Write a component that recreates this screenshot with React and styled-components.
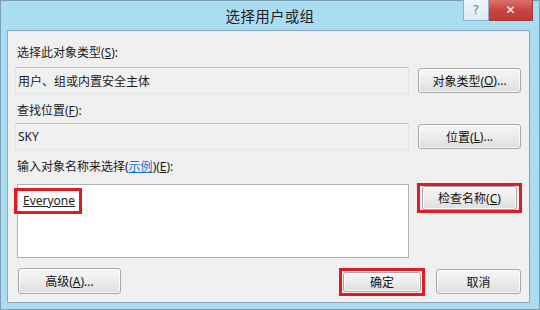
import React from "react";
import styled, { createGlobalStyle } from "styled-components";

const Global = createGlobalStyle`
  html, body { margin: 0; padding: 0; background: #ffffff; }
  body { font-family: "Noto Sans", "Noto Sans CJK SC", sans-serif; }
`;

const Window = styled.div`
  width: 540px;
  height: 310px;
  box-sizing: border-box;
  border: 1px solid #7f9db0;
  background: linear-gradient(180deg, #a9ddf3 0%, #abdcf1 100%);
  display: flex;
  flex-direction: column;
`;

const TitleBar = styled.div`
  height: 29px;
  flex: none;
  display: grid;
  grid-template-columns: 1fr auto 1fr;
  align-items: start;
`;

const Title = styled.div`
  grid-column: 2;
  margin-top: 5px;
  font-family: "Noto Sans CJK SC", sans-serif;
  font-size: 14.5px;
  line-height: 20px;
  color: #1e1e1e;
  letter-spacing: 0.3px;
`;

const Caption = styled.div`
  grid-column: 3;
  justify-self: end;
  display: flex;
  margin-right: 6px;
  margin-top: -1px;
`;

const CapButton = styled.div`
  height: 21px;
  width: ${(p) => p.$w}px;
  box-sizing: border-box;
  display: flex;
  align-items: center;
  justify-content: center;
  font-family: "DejaVu Sans", sans-serif;
  font-size: 12px;
  font-weight: ${(p) => (p.$close ? 700 : 400)};
  color: ${(p) => (p.$close ? "#ffffff" : "#6a7a86")};
  border: 1px solid ${(p) => (p.$close ? "#a33a3a" : "#8fb0c2")};
  border-top: none;
  background: ${(p) =>
    p.$close
      ? "linear-gradient(180deg, #d9706c 0%, #c7433f 55%, #c0393a 100%)"
      : "linear-gradient(180deg, #eef6fa 0%, #dcebf3 100%)"};
  & + & { border-left: none; }
`;

const Panel = styled.div`
  flex: 1;
  margin: 0 9px 6px 6px;
  border: 1px solid #8ea9b8;
  background: #f0f0f0;
  padding: 14px 8px 0 7px;
  display: flex;
  flex-direction: column;
`;

const Label = styled.div`
  font-size: 12px;
  line-height: 16px;
  color: #1a1a1a;
  padding-left: 2px;
  margin-top: ${(p) => p.$mt || 0}px;
`;

const Key = styled.span`
  text-decoration: underline;
`;

const Link = styled.span`
  color: #1a6fc9;
  text-decoration: underline;
`;

const FieldRow = styled.div`
  display: grid;
  grid-template-columns: 1fr 103px;
  column-gap: 9px;
  align-items: ${(p) => p.$align || "center"};
  margin-top: ${(p) => p.$mt || 0}px;
`;

const ReadBox = styled.div`
  height: ${(p) => p.$h}px;
  box-sizing: border-box;
  border-top: 1px solid #c4c4c4;
  border-left: 1px solid #e2e2e2;
  border-right: 1px solid #e2e2e2;
  border-bottom: 1px solid #e6e6e6;
  background: #f0f0f0;
  padding-left: 2px;
  font-size: 12px;
  display: flex;
  align-items: center;
  color: #1a1a1a;
`;

const Button = styled.div`
  height: ${(p) => p.$h || 25}px;
  width: ${(p) => (p.$w ? `${p.$w}px` : "auto")};
  flex: ${(p) => (p.$grow ? 1 : "none")};
  margin-left: ${(p) => p.$ml || 0}px;
  margin-top: ${(p) => p.$mt || 0}px;
  box-sizing: border-box;
  border: 1px solid #a8a8a8;
  border-radius: 3px;
  background: linear-gradient(180deg, #f7f7f7 0%, #ececec 50%, #dedede 100%);
  box-shadow: inset 0 0 0 1px rgba(255, 255, 255, 0.7);
  font-size: 12px;
  color: #111;
  display: flex;
  align-items: center;
  justify-content: center;
`;

const TextArea = styled.div`
  height: 74px;
  margin-left: 2px;
  box-sizing: border-box;
  border: 1px solid #aeb0b5;
  background: #ffffff;
  padding: 2px 0 0 0;
  display: flex;
  align-items: flex-start;
`;

const Mark = styled.div`
  border: 3px solid #e11b24;
  box-sizing: border-box;
  padding: ${(p) => p.$pad};
  margin: ${(p) => p.$m || 0};
  display: ${(p) => (p.$inline ? "inline-flex" : "flex")};
`;

const Entry = styled.span`
  font-size: 12px;
  line-height: 16px;
  color: #222;
  text-decoration: underline;
`;

const BottomRow = styled.div`
  display: flex;
  align-items: flex-start;
  margin-top: 10px;
  padding-left: 3px;
`;

const Spacer = styled.div`
  flex: 1;
`;

export default function App() {
  return (
    <>
      <Global />
      <Window>
        <TitleBar>
          <Title>选择用户或组</Title>
          <Caption>
            <CapButton $w={26}>?</CapButton>
            <CapButton $w={44} $close>
              ✕
            </CapButton>
          </Caption>
        </TitleBar>
        <Panel>
          <Label>
            选择此对象类型(<Key>S</Key>):
          </Label>
          <FieldRow $mt={6}>
            <ReadBox $h={27}>用户、组或内置安全主体</ReadBox>
            <Button>
              对象类型(<Key>O</Key>)...
            </Button>
          </FieldRow>
          <Label $mt={9}>
            查找位置(<Key>F</Key>):
          </Label>
          <FieldRow $mt={4}>
            <ReadBox $h={27}>SKY</ReadBox>
            <Button>
              位置(<Key>L</Key>)...
            </Button>
          </FieldRow>
          <Label $mt={9}>
            输入对象名称来选择(<Link>示例</Link>)(<Key>E</Key>):
          </Label>
          <FieldRow $mt={9} $align="start">
            <TextArea>
              <Mark $pad="2px 4px 2px 6px" $m="1px 0 0 -4px" $inline>
                <Entry>Everyone</Entry>
              </Mark>
            </TextArea>
            <Mark $pad="0 2px" $m="-1px -1px 0 -1px">
              <Button $h={24} $grow>
                检查名称(<Key>C</Key>)
              </Button>
            </Mark>
          </FieldRow>
          <BottomRow>
            <Button $w={103} $h={26}>
              高级(<Key>A</Key>)...
            </Button>
            <Spacer />
            <Mark $pad="1px">
              <Button $w={78} $h={20}>
                确定
              </Button>
            </Mark>
            <Button $w={85} $h={25} $ml={11} $mt={1}>
              取消
            </Button>
          </BottomRow>
        </Panel>
      </Window>
    </>
  );
}
